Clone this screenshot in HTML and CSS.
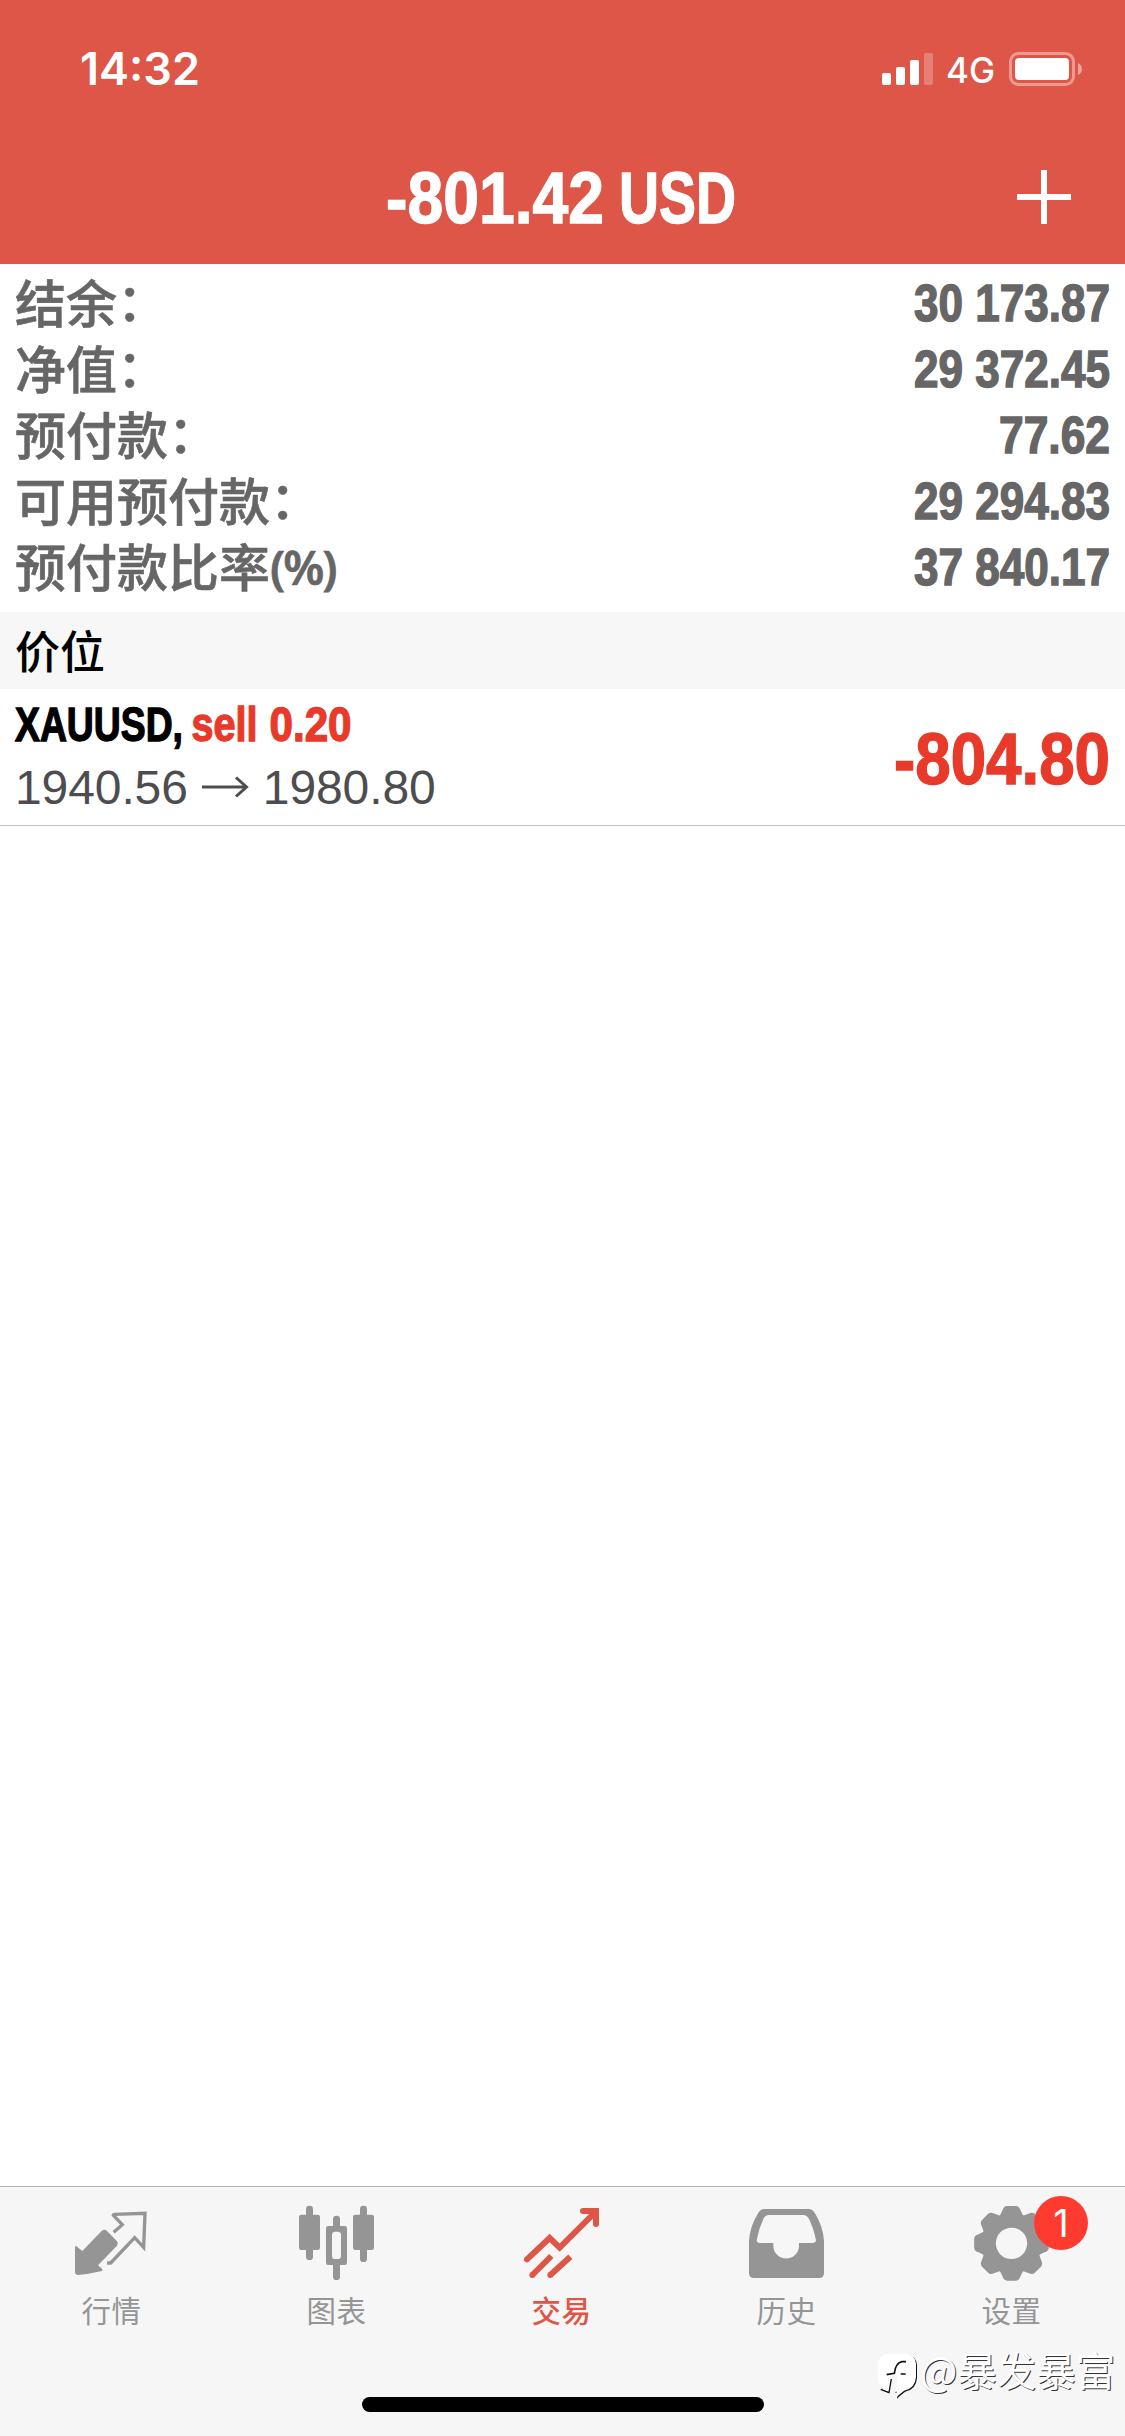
FILE: index.html
```html
<!DOCTYPE html>
<html lang="zh-CN">
<head>
<meta charset="utf-8">
<title>交易</title>
<link rel="stylesheet" href="styles.css">
</head>
<body>
<div class="screen">
  <header class="header">
    <div class="status">
      <span class="time">14:32</span>
      <div class="status-right">
        <svg class="signal" viewBox="0 0 51 32">
          <rect x="0" y="20" width="9" height="12" rx="2"/>
          <rect x="14" y="14" width="9" height="18" rx="2"/>
          <rect x="28" y="7" width="9" height="25" rx="2"/>
          <rect x="42" y="0" width="9" height="32" rx="2" opacity=".25"/>
        </svg>
        <span class="network">4G</span>
        <svg class="battery" viewBox="0 0 74 34">
          <rect x="1.5" y="1.5" width="63" height="31" rx="8" fill="none" stroke="#fff" stroke-opacity=".4" stroke-width="3"/>
          <rect x="6" y="6" width="54" height="22" rx="4"/>
          <path d="M69 11Q73 13 73 17T69 23Z" opacity=".45"/>
        </svg>
      </div>
    </div>
    <div class="titlebar">
      <svg class="title condensed" viewBox="0 0 354 90">
        <text x="2" y="67" textLength="218" lengthAdjust="spacingAndGlyphs">-801.42</text>
        <text x="235" y="67" textLength="117" lengthAdjust="spacingAndGlyphs">USD</text>
      </svg>
      <svg class="plus" viewBox="0 0 54 54"><path d="M24 0h6v24h24v6H30v24h-6V30H0v-6h24z"/></svg>
    </div>
  </header>

  <section class="summary">
    <div class="row"><span>结余<span class="colon">：</span></span><svg class="value condensed" viewBox="0 0 205 66"><text x="5" y="53" textLength="196" lengthAdjust="spacingAndGlyphs">30 173.87</text></svg></div>
    <div class="row"><span>净值<span class="colon">：</span></span><svg class="value condensed" viewBox="0 0 205 66"><text x="5" y="53" textLength="196" lengthAdjust="spacingAndGlyphs">29 372.45</text></svg></div>
    <div class="row"><span>预付款<span class="colon">：</span></span><svg class="value condensed" viewBox="0 0 205 66"><text x="90" y="53" textLength="111" lengthAdjust="spacingAndGlyphs">77.62</text></svg></div>
    <div class="row"><span>可用预付款<span class="colon">：</span></span><svg class="value condensed" viewBox="0 0 205 66"><text x="5" y="53" textLength="196" lengthAdjust="spacingAndGlyphs">29 294.83</text></svg></div>
    <div class="row"><span>预付款比率<span class="unit">(%)</span></span><svg class="value condensed" viewBox="0 0 205 66"><text x="5" y="53" textLength="196" lengthAdjust="spacingAndGlyphs">37 840.17</text></svg></div>
  </section>

  <h2 class="section-title">价位</h2>

  <article class="position">
    <div class="position-info">
      <svg class="symbol condensed" viewBox="0 0 340 66">
        <text x="0" y="52" textLength="168" lengthAdjust="spacingAndGlyphs">XAUUSD,</text>
        <text class="sell" x="176.500" y="52" textLength="66" lengthAdjust="spacingAndGlyphs">sell</text>
        <text class="sell" x="254.500" y="52" textLength="82" lengthAdjust="spacingAndGlyphs">0.20</text>
      </svg>
      <div class="prices">
        <span>1940.56</span>
        <svg class="arrow" viewBox="0 0 46 22"><path d="M0 11H44M34 1.500L44.500 11L34 20.500"/></svg>
        <span>1980.80</span>
      </div>
    </div>
    <svg class="profit condensed" viewBox="0 0 217 90"><text x="1" y="70" textLength="216" lengthAdjust="spacingAndGlyphs">-804.80</text></svg>
  </article>

  <main class="blank"></main>

  <nav class="tabs">
    <div class="tab">
      <svg viewBox="0 51 675 300">
        <path d="M225 231Q226 226 231 230L247 243L305 183Q313 176 321 183L351 214Q356 220 351 227L294 286L306 296Q310 302 302 304Q270 312 232 315Q225 314 225 307Z"/>
        <path class="line" d="M341 187L367 164L341 137Q337 134 344 133L435 130L431 232L404 203L332 279L321 279" stroke-width="10"/>
      </svg>
      <span>行情</span>
    </div>
    <div class="tab">
      <svg viewBox="675 51 675 300">
        <rect x="897" y="134" width="63" height="106" rx="7"/><rect x="918" y="107" width="21" height="163" rx="10"/>
        <rect x="1059" y="134" width="63" height="106" rx="7"/><rect x="1080" y="107" width="21" height="169" rx="10"/>
        <rect x="999" y="137" width="21" height="45" rx="10"/><rect x="999" y="270" width="21" height="60" rx="10"/>
        <path d="M985 168h49q7 0 7 7v103q0 7-7 7h-49q-7 0-7-7V175q0-7 7-7z"/>
        <rect x="996" y="185" width="27" height="82" rx="10" fill="#f6f6f6"/>
      </svg>
      <span>图表</span>
    </div>
    <div class="tab active">
      <svg viewBox="0 51 675 300">
        <path class="line" stroke-width="18" stroke-linecap="round" d="M231 268L299 204L329 233L435 127M399 123H438V162"/>
        <path class="line" stroke-width="18" d="M247 315L304 258M301 315L361 260"/>
        <circle cx="247" cy="315" r="9"/><circle cx="301" cy="315" r="9"/>
      </svg>
      <span>交易</span>
    </div>
    <div class="tab">
      <svg viewBox="675 51 675 300">
        <path fill-rule="evenodd" d="M943 117H1075Q1088 117 1095 130Q1119 170 1122 212V309Q1122 324 1107 324H912Q897 324 897 309V212Q900 170 924 130Q931 117 943 117ZM958 135Q945 135 940 147Q926 177 920 211Q921 219 930 219H970V227A38.500 38.500 0 0 0 1047 227V219H1090Q1098 218 1098 211Q1091 175 1077 147Q1071 135 1059 135Z"/>
      </svg>
      <span>历史</span>
    </div>
    <div class="tab">
      <svg viewBox="225 51 675 300">
        <g transform="translate(559.500 220)">
          <path id="tooth" d="M-40-76Q-32-86-27-99Q-23-112-13-112H13Q23-112 27-99Q32-86 40-76V76Q32 86 27 99Q23 112 13 112H-13Q-23 112-27 99Q-32 86-40 76Z"/>
          <use href="#tooth" transform="rotate(45)"/><use href="#tooth" transform="rotate(90)"/><use href="#tooth" transform="rotate(135)"/>
          <circle r="47" fill="#f6f6f6"/>
        </g>
      </svg>
      <span>设置</span>
      <b class="badge">1</b>
    </div>
  </nav>
  <div class="home-area"><div class="home-indicator"></div></div>

  <div class="watermark">
    <svg viewBox="24 39 120 144">
      <path fill="#111" transform="translate(3 3)" d="M52 42H108Q137 46 138 72V112Q135 144 106 151Q96 156 78 173L80 155H52Q26 146 24 116V72Q26 46 52 42Z"/>
      <path fill="#fff" d="M52 42H108Q137 46 138 72V112Q135 144 106 151Q96 156 78 173L80 155H52Q26 146 24 116V72Q26 46 52 42Z"/>
      <path fill="#f6f6f6" d="M67 108H83L76 160H56Z"/>
      <path d="M108 65H96Q77 68 73 100L50 104M92 102H107" fill="none" stroke="#111" stroke-width="5"/>
      <path d="M64 117L57 158L32 148" fill="none" stroke="#111" stroke-width="4"/>
    </svg>
    <span>@暴发暴富</span>
  </div>
</div>
</body>
</html>
```
FILE: styles.css
```css
* { box-sizing: border-box; }
body { margin: 0; }
.screen {
  position: relative;
  display: flex;
  flex-direction: column;
  width: 1125px;
  height: 2436px;
  background: #fff;
  font-family: "Liberation Sans", "Noto Sans CJK SC", sans-serif;
}
svg { display: block; flex: none; overflow: visible; }

.header { height: 264px; background: #de5648; color: #fff; fill: #fff; }
.status {
  display: flex;
  justify-content: space-between;
  height: 132px;
  padding: 0 42px 0 80px;
  font-family: Inter, sans-serif;
}
.time { padding-top: 42px; font-size: 45px; line-height: 54px; font-weight: 600; }
.status-right { display: flex; align-items: flex-start; padding-top: 52px; }
.signal { width: 51px; height: 32px; margin-top: 1px; }
.network { width: 50px; margin: -4px 13px 0 13px; font-size: 35px; line-height: 44px; font-weight: 500; }
.battery { width: 74px; height: 34px; }
.titlebar { display: flex; justify-content: space-between; height: 132px; padding: 24px 54px 0 384px; }
.condensed { font-weight: 700; stroke-width: 1.4px; }
.title { width: 354px; height: 90px; font-size: 72px; stroke: #fff; }
.plus { width: 54px; height: 54px; margin-top: 14px; }

.summary { height: 348px; padding: 3px 11px 0 15px; color: #666; fill: #666; stroke: none; }
.row {
  display: flex;
  justify-content: space-between;
  height: 66px;
  font: 500 51px/66px "Noto Sans CJK SC", sans-serif;
  -webkit-text-stroke: .6px #666;
}
.row > span { height: 66px; margin-top: 1px; }
.colon { vertical-align: 2px; line-height: 0; }
.unit { font-family: "Noto Sans", sans-serif; font-size: 47px; font-weight: 600; line-height: 0; letter-spacing: -2px; vertical-align: 2px; }
.value { width: 205px; height: 66px; margin-top: 1px; font-family: "Liberation Sans", sans-serif; font-size: 51px; stroke: #666; -webkit-text-stroke: 1.2px #666; }

.section-title {
  margin: 0;
  height: 77px;
  padding-left: 15px;
  background: #f7f7f7;
  font: 500 45px/75px "Noto Sans CJK SC", sans-serif;
}
.position {
  display: flex;
  justify-content: space-between;
  height: 137px;
  padding: 0 15px;
  border-bottom: 1px solid #c3c3c5;
}
.symbol { width: 340px; height: 66px; font-size: 48px; fill: #000; stroke: #000; }
.symbol .sell, .profit { fill: #e83a2a; stroke: #e83a2a; }
.prices { display: flex; align-items: center; height: 60px; margin-top: 2px; color: #4d4d50; font-size: 48px; letter-spacing: -.1px; }
.arrow { width: 46px; height: 22px; margin: 0 15px 1px 14px; fill: none; stroke: #4d4d50; stroke-width: 3px; }
.profit { width: 217px; height: 90px; margin-top: 25px; font-size: 72px; }
.blank { flex: 1; }

.tabs { display: grid; grid-template-columns: repeat(5, 225px); height: 150px; border-top: 1px solid #b2b2b2; background: #f6f6f6; }
.tab { position: relative; display: flex; flex-direction: column; align-items: center; color: #959595; fill: #959595; stroke: none; }
.tab svg { width: 225px; height: 100px; }
.tab .line { fill: none; stroke: currentColor; }
.tab span { padding-right: 2px; font: 400 29.5px/44px "Noto Sans CJK SC", sans-serif; letter-spacing: .5px; }
.tab.active { color: #de5648; fill: #de5648; }
.tab.active span { font-weight: 500; }
.badge {
  position: absolute;
  left: 134px;
  top: 9px;
  width: 54px;
  height: 54px;
  border-radius: 50%;
  background: #ff3b30;
  color: #fff;
  font: 400 38px/54px Inter, sans-serif;
  text-align: center;
}
.home-area { height: 100px; padding: 61px 361px 0 362px; background: #f6f6f6; }
.home-indicator { height: 15px; border-radius: 8px; background: #000; }

.watermark { position: absolute; left: 878px; top: 2353px; display: flex; color: #fff; }
.watermark svg { width: 40px; height: 48px; }
.watermark span {
  margin: -12px 0 0 2px;
  white-space: nowrap;
  font: 400 39.5px/56px "Noto Sans CJK SC", sans-serif;
  text-shadow: 1px 1px 0 #333;
}
```
